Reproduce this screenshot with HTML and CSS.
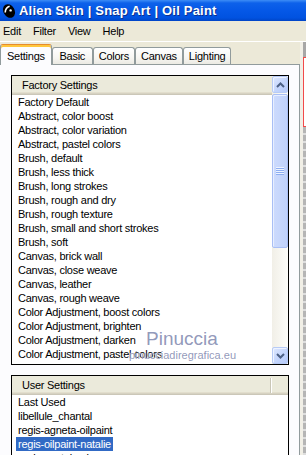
FILE: index.html
```html
<!DOCTYPE html>
<html>
<head>
    <meta charset="UTF-8">
    <title>Alien Skin | Snap Art | Oil Paint</title>
    <link rel="stylesheet" href="styles.css">
</head>
<body>
    <div class="app-window">
        <div class="title-bar">
            <svg class="app-icon" width="14" height="16" viewBox="0 0 14 16">
                <ellipse cx="7" cy="8" rx="5.6" ry="7.2" transform="rotate(-30 7 8)" fill="#000"/>
                <path d="M3.2 9.5 Q3.4 4.6 7.6 3.2" stroke="#fff" stroke-width="1.6" fill="none"/>
                <circle cx="8.6" cy="7.4" r="1.2" fill="#fff"/>
            </svg>
            <span>Alien Skin | Snap Art | Oil Paint</span>
        </div>
        <div class="menu-bar">
            <span>Edit</span>
            <span>Filter</span>
            <span>View</span>
            <span>Help</span>
        </div>
        <div class="work-area">
            <div class="dialog">
                <div class="tab-strip">
                    <div class="tab active">Settings</div>
                    <div class="tab">Basic</div>
                    <div class="tab">Colors</div>
                    <div class="tab">Canvas</div>
                    <div class="tab">Lighting</div>
                </div>
                <div class="tab-page">
                    <div class="list-box factory">
                        <div class="list-main">
                            <div class="list-header">
                                <div class="header-col">Factory Settings</div>
                            </div>
                            <ul class="list-items">
                                <li><span>Factory Default</span></li>
                                <li><span>Abstract, color boost</span></li>
                                <li><span>Abstract, color variation</span></li>
                                <li><span>Abstract, pastel colors</span></li>
                                <li><span>Brush, default</span></li>
                                <li><span>Brush, less thick</span></li>
                                <li><span>Brush, long strokes</span></li>
                                <li><span>Brush, rough and dry</span></li>
                                <li><span>Brush, rough texture</span></li>
                                <li><span>Brush, small and short strokes</span></li>
                                <li><span>Brush, soft</span></li>
                                <li><span>Canvas, brick wall</span></li>
                                <li><span>Canvas, close weave</span></li>
                                <li><span>Canvas, leather</span></li>
                                <li><span>Canvas, rough weave</span></li>
                                <li><span>Color Adjustment, boost colors</span></li>
                                <li><span>Color Adjustment, brighten</span></li>
                                <li><span>Color Adjustment, darken</span></li>
                                <li><span>Color Adjustment, pastel colors</span></li>
                            </ul>
                        </div>
                        <div class="scrollbar">
                            <div class="sb-button">
                                <svg width="9" height="6" viewBox="0 0 9 6"><polyline points="1,5 4.5,1.5 8,5" fill="none" stroke="#4d6185" stroke-width="2"/></svg>
                            </div>
                            <div class="sb-track">
                                <div class="sb-thumb"><div class="sb-grip"></div></div>
                            </div>
                            <div class="sb-button">
                                <svg width="9" height="6" viewBox="0 0 9 6"><polyline points="1,1 4.5,4.5 8,1" fill="none" stroke="#4d6185" stroke-width="2"/></svg>
                            </div>
                        </div>
                    </div>

                    <div class="list-box user">
                        <div class="list-header">
                            <div class="header-col divided">User Settings</div>
                        </div>
                        <ul class="list-items">
                            <li><span>Last Used</span></li>
                            <li><span>libellule_chantal</span></li>
                            <li><span>regis-agneta-oilpaint</span></li>
                            <li class="selected"><span>regis-oilpaint-natalie</span></li>
                            <li><span>regis-pastel-colors</span></li>
                        </ul>
                    </div>

                    <div class="watermark">
                        <span class="wm-name">Pinuccia</span>
                        <span class="wm-url">pinucciadiregrafica.eu</span>
                    </div>
                </div>
            </div>
            <div class="side-strip">
                <div class="side-top"></div>
                <div class="side-preview"></div>
                <div class="side-grip"></div>
            </div>
        </div>
    </div>
</body>
</html>
```

FILE: styles.css
```css
* {
    box-sizing: border-box;
}

body {
    margin: 0;
    width: 306px;
    height: 455px;
    overflow: hidden;
    background-color: #ece9d8;
    font-family: "Liberation Sans", Arial, sans-serif;
    font-size: 11px;
    letter-spacing: -0.25px;
    color: #000;
}

.app-window {
    display: flex;
    flex-direction: column;
    height: 455px;
}

.title-bar {
    flex: none;
    height: 21px;
    display: flex;
    align-items: center;
    gap: 3px;
    padding-left: 2px;
    background: linear-gradient(to bottom, #3d8df6 0, #0d61ea 3px, #0558e7 50%, #0152e0 85%, #0044c6 100%);
    color: #fff;
}

.title-bar span {
    font-size: 13px;
    font-weight: 700;
    letter-spacing: 0.2px;
    text-shadow: 1px 1px 0 #0c2f8e;
}

.app-icon {
    flex: none;
}

.menu-bar {
    flex: none;
    height: 21px;
    display: flex;
    align-items: center;
    gap: 12px;
    padding-left: 3px;
    border-bottom: 1px solid #fff;
}

.work-area {
    flex: 1;
    display: flex;
    min-height: 0;
}

.dialog {
    width: 300px;
    display: flex;
    flex-direction: column;
}

.tab-strip {
    flex: none;
    height: 22px;
    display: flex;
    align-items: flex-end;
}

.tab {
    height: 17px;
    min-width: 41px;
    padding: 0 5px;
    display: flex;
    align-items: center;
    justify-content: center;
    border: 1px solid #919b9c;
    border-bottom: none;
    border-radius: 3px 3px 0 0;
    background: linear-gradient(to bottom, #ffffff, #f7f6f2 60%, #ebeae3);
}

.tab.active {
    height: 21px;
    padding: 2px 6px 1px;
    margin-bottom: -1px;
    position: relative;
    z-index: 1;
    background: #fcfcfe;
    border-top: 1px solid #e68b2c;
    box-shadow: inset 0 2px 0 #ffc73c;
}

.tab-page {
    flex: 1;
    position: relative;
    background-color: #fcfcfe;
    border-top: 1px solid #919b9c;
    border-right: 1px solid #919b9c;
    padding: 10px 10px 0 11px;
}

.list-box {
    border: 1px solid #000;
    background-color: #fff;
    display: flex;
}

.list-box.factory {
    height: 290px;
}

.list-box.user {
    height: 120px;
    margin-top: 10px;
    flex-direction: column;
}

.list-main {
    flex: 1;
    min-width: 0;
    overflow: hidden;
}

.list-header {
    height: 19px;
    display: flex;
    align-items: center;
    background-color: #ebeadb;
    border-bottom: 1px solid #cbc7b8;
    box-shadow: inset 0 -1px 0 #d6d2c2, inset 0 -2px 0 #e2decd;
}

.header-col {
    flex: none;
    width: 259px;
    padding-left: 10px;
    line-height: 15px;
}

.header-col.divided {
    border-right: 1px solid #c9c6b6;
    box-shadow: 1px 0 0 #fff;
}

.list-items {
    list-style: none;
    margin: 0;
    padding: 0;
}

.list-items li {
    height: 14px;
    line-height: 14px;
    padding-left: 4px;
    white-space: nowrap;
}

.list-items li span {
    display: inline-block;
    padding: 0 2px;
}

.list-items li.selected span {
    background-color: #316ac5;
    color: #fff;
}

.scrollbar {
    flex: none;
    width: 16px;
    display: flex;
    flex-direction: column;
    background: linear-gradient(to right, #f1efe7, #fdfdfa);
}

.sb-button {
    flex: none;
    height: 17px;
    display: flex;
    align-items: center;
    justify-content: center;
    border: 1px solid #b7cbf6;
    border-radius: 2px;
    background: linear-gradient(135deg, #dde7fe, #c2d4fc 60%, #b6cafa);
    box-shadow: inset 1px 1px 0 #eef3ff;
}

.sb-track {
    flex: 1;
    padding-top: 1px;
}

.sb-thumb {
    height: 154px;
    display: flex;
    align-items: center;
    justify-content: center;
    border: 1px solid #a9bff5;
    border-radius: 2px;
    background: linear-gradient(to right, #cddbfd, #c0d2fb);
    box-shadow: inset 1px 1px 0 #e8efff;
}

.sb-grip {
    width: 8px;
    height: 8px;
    background: repeating-linear-gradient(to bottom, #eef4ff 0, #eef4ff 1px, #8eaef2 1px, #8eaef2 2px);
}

.watermark {
    position: absolute;
    left: 129px;
    top: 264px;
    color: rgba(118, 126, 168, 0.8);
    letter-spacing: 0;
    text-shadow: 0 0 1px #fff;
}

.wm-name {
    display: block;
    margin-left: 17px;
    font-size: 19px;
    line-height: 19px;
}

.wm-url {
    display: block;
    margin-top: 2px;
    font-size: 11px;
    line-height: 11px;
}

.side-strip {
    width: 6px;
    display: flex;
    flex-direction: column;
    padding-left: 3px;
    background-color: #f1efe6;
}

.side-top {
    height: 15px;
    background-color: #a7a7a7;
}

.side-preview {
    height: 70px;
    border: 1px solid #f24a4a;
    border-right: none;
    background-color: #fff;
}

.side-grip {
    flex: 1;
    background: repeating-linear-gradient(to bottom, #b5b5b5 0, #b5b5b5 6px, #dedede 6px, #dedede 8px);
}
```
